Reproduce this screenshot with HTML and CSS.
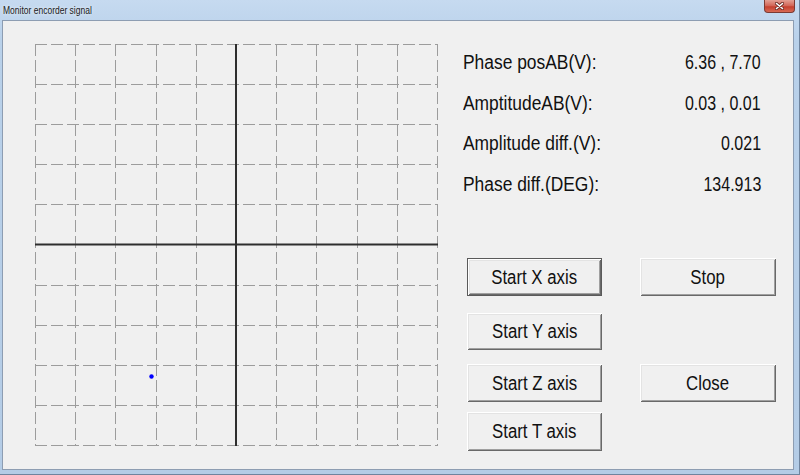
FILE: index.html
```html
<!DOCTYPE html>
<html lang="en">
<head>
    <meta charset="UTF-8">
    <meta name="viewport" content="width=device-width, initial-scale=1.0">
    <title>Monitor encorder signal</title>
    <link rel="stylesheet" href="styles.css">
</head>
<body>
    <div class="window">
        <div class="titlebar">
            <span class="title">Monitor encorder signal</span>
            <div class="close-btn">
                <svg width="9" height="8" viewBox="0 0 9 8">
                    <path d="M1.5 1.5 L7.5 6.5 M7.5 1.5 L1.5 6.5" stroke="#6b2e28" stroke-width="3.2" stroke-linecap="round"/>
                    <path d="M1.5 1.5 L7.5 6.5 M7.5 1.5 L1.5 6.5" stroke="#fff" stroke-width="1.6" stroke-linecap="round"/>
                </svg>
            </div>
        </div>
        <div class="frame-body">
            <div class="client">
                <!-- lissajous scope: 10 x 10 dashed grid + axes -->
                <svg class="scope" width="405" height="405" viewBox="0 0 405 405">
                    <g class="grid">
                        <line x1="1.5" y1="1" x2="1.5" y2="403"/>
                        <line x1="41.5" y1="1" x2="41.5" y2="403"/>
                        <line x1="81.5" y1="1" x2="81.5" y2="403"/>
                        <line x1="122.5" y1="1" x2="122.5" y2="403"/>
                        <line x1="162.5" y1="1" x2="162.5" y2="403"/>
                        <line x1="242.5" y1="1" x2="242.5" y2="403"/>
                        <line x1="282.5" y1="1" x2="282.5" y2="403"/>
                        <line x1="323.5" y1="1" x2="323.5" y2="403"/>
                        <line x1="363.5" y1="1" x2="363.5" y2="403"/>
                        <line x1="403.5" y1="1" x2="403.5" y2="403"/>

                        <line x1="1" y1="1.5" x2="404" y2="1.5"/>
                        <line x1="1" y1="41.5" x2="404" y2="41.5"/>
                        <line x1="1" y1="81.5" x2="404" y2="81.5"/>
                        <line x1="1" y1="121.5" x2="404" y2="121.5"/>
                        <line x1="1" y1="161.5" x2="404" y2="161.5"/>
                        <line x1="1" y1="242.5" x2="404" y2="242.5"/>
                        <line x1="1" y1="282.5" x2="404" y2="282.5"/>
                        <line x1="1" y1="322.5" x2="404" y2="322.5"/>
                        <line x1="1" y1="362.5" x2="404" y2="362.5"/>
                        <line x1="1" y1="402.5" x2="404" y2="402.5"/>
                    </g>
                    <g class="axis">
                        <line x1="202" y1="1" x2="202" y2="403"/>
                        <line x1="1" y1="201.5" x2="404" y2="201.5"/>
                    </g>
                    <circle class="point" cx="117.5" cy="333.5" r="2.2"/>
                </svg>

                <div class="panel">
                    <div class="info">
                        <div class="info-row"><span class="label">Phase posAB(V):</span><span class="value">6.36 , 7.70</span></div>
                        <div class="info-row"><span class="label">AmptitudeAB(V):</span><span class="value">0.03 , 0.01</span></div>
                        <div class="info-row"><span class="label">Amplitude diff.(V):</span><span class="value">0.021</span></div>
                        <div class="info-row"><span class="label">Phase diff.(DEG):</span><span class="value">134.913</span></div>
                    </div>
                    <div class="buttons">
                        <button class="btn default row-x col-1"><span>Start X axis</span></button>
                        <button class="btn row-x col-2"><span>Stop</span></button>
                        <button class="btn row-y col-1"><span>Start Y axis</span></button>
                        <button class="btn row-z col-1"><span>Start Z axis</span></button>
                        <button class="btn row-z col-2"><span>Close</span></button>
                        <button class="btn row-t col-1"><span>Start T axis</span></button>
                    </div>
                </div>
            </div>
        </div>
    </div>
</body>
</html>
```
FILE: styles.css
```css
body {
    margin: 0;
    font-family: "Liberation Sans", Arial, sans-serif;
    background: #f0f0f0;
}
.window {
    box-sizing: border-box;
    width: 800px;
    height: 475px;
    display: flex;
    flex-direction: column;
    background: linear-gradient(#c6daf0, #b9d1ea 40px, #b4cce6);
    border-right: 1px solid #6f849e;
    border-bottom: 1px solid #6f849e;
}
.titlebar {
    position: relative;
    height: 20px;
    flex: none;
    padding-left: 3px;
}
.title {
    display: inline-block;
    margin-top: 3px;
    font-size: 10px;
    line-height: 12px;
    color: #1a1a1a;
    transform: scaleX(.85);
    transform-origin: left;
    text-shadow: 0 0 4px rgba(255, 255, 255, .9);
}
.close-btn {
    position: absolute;
    top: -1px;
    right: 4px;
    width: 31px;
    height: 14px;
    box-sizing: border-box;
    border: 1px solid #7b3a33;
    border-top: none;
    border-radius: 0 0 4px 4px;
    background: linear-gradient(#e6aa9f, #d3685a 50%, #c5402f 60%, #d86a55);
    display: flex;
    justify-content: center;
    align-items: center;
}
.frame-body {
    flex: 1;
    display: flex;
    padding: 0 5px 4px 2px;
}
.client {
    flex: 1;
    display: flex;
    align-items: flex-start;
    background: #f0f0f0;
    border: 1px solid #8d9db2;
    padding: 21px 0 0 31px;
}
.scope {
    display: block;
    margin-top: 1px;
}
.grid line {
    stroke: #9c9c9c;
    stroke-width: 1;
    stroke-dasharray: 12 4;
}
.axis line {
    stroke: #2e2e2e;
    stroke-width: 2;
}
.point {
    fill: #0000ff;
}
.panel {
    margin-left: 24px;
    width: 313px;
}
.info-row {
    display: flex;
    justify-content: space-between;
    height: 40.5px;
    line-height: 40.5px;
    padding-right: 15px;
    font-size: 20px;
    color: #111;
}
.label, .value {
    display: inline-block;
    transform: scaleX(.87);
    transform-origin: left;
}
.value {
    transform: scaleX(.8);
    transform-origin: right;
}
.buttons {
    display: grid;
    grid-template-columns: 135px 136px;
    grid-template-rows: 38px 17px 37px 14px 38px 10px 39px;
    column-gap: 38px;
    margin: 54px 0 0 4px;
}
.btn {
    font-family: "Liberation Sans", Arial, sans-serif;
    font-size: 20px;
    color: #111;
    background: #f0f0f0;
    border: none;
    padding: 0;
    box-shadow: inset 1px 1px #fff, inset -1px -1px #696969, inset 2px 2px #e3e3e3, inset -2px -2px #a0a0a0;
}
.btn span {
    display: inline-block;
    transform: scaleX(.84);
}
.btn.default {
    border: 1px solid #5a5a5a;
}
.row-x { grid-row: 1; }
.row-y { grid-row: 3; }
.row-z { grid-row: 5; }
.row-t { grid-row: 7; }
.col-1 { grid-column: 1; }
.col-2 { grid-column: 2; }
```
